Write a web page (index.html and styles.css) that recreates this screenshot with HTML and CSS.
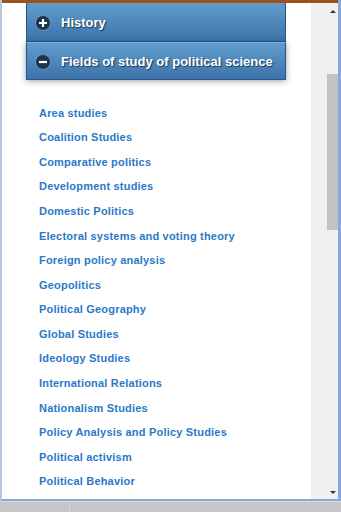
FILE: index.html
```html
<!DOCTYPE html>
<html>
<head>
<meta charset="utf-8">
<link rel="stylesheet" href="styles.css">
</head>
<body>
<div class="frame">
  <div class="window">
    <div class="topbar"></div>
    <div class="main">
      <div class="content">
        <div class="accordion">
          <div class="acc-head first">
            <span class="acc-icon"><svg width="16" height="16" viewBox="0 0 16 16"><circle cx="8" cy="8" r="7.5" fill="#1a3550" stroke="#6f93b8" stroke-width="1"/><path d="M4 8h8M8 4v8" stroke="#fff" stroke-width="2.2"/></svg></span>
            <span class="acc-title">History</span>
          </div>
          <div class="acc-head open">
            <span class="acc-icon"><svg width="16" height="16" viewBox="0 0 16 16"><circle cx="8" cy="8" r="7.5" fill="#1a3550" stroke="#6f93b8" stroke-width="1"/><path d="M4 8h8" stroke="#fff" stroke-width="2.2"/></svg></span>
            <span class="acc-title">Fields of study of political science</span>
          </div>
        </div>
        <ul class="fields">
          <li>Area studies</li>
          <li>Coalition Studies</li>
          <li>Comparative politics</li>
          <li>Development studies</li>
          <li>Domestic Politics</li>
          <li>Electoral systems and voting theory</li>
          <li>Foreign policy analysis</li>
          <li>Geopolitics</li>
          <li>Political Geography</li>
          <li>Global Studies</li>
          <li>Ideology Studies</li>
          <li>International Relations</li>
          <li>Nationalism Studies</li>
          <li>Policy Analysis and Policy Studies</li>
          <li>Political activism</li>
          <li>Political Behavior</li>
        </ul>
      </div>
      <div class="scrollbar">
        <div class="sb-col">
          <div class="arrow up"></div>
          <div class="thumb"></div>
          <div class="sb-fill"></div>
          <div class="arrow down"></div>
        </div>
      </div>
    </div>
  </div>
  <div class="taskbar">
    <div class="task-seg"></div>
  </div>
</div>
</body>
</html>
```

FILE: styles.css
```css
html, body {
  margin: 0;
  padding: 0;
}

.frame {
  width: 341px;
  height: 512px;
  display: flex;
  flex-direction: column;
  background: #c6c6c6;
  overflow: hidden;
}

.window {
  height: 501px;
  box-sizing: border-box;
  border-left: 2px solid #b8c7dc;
  border-right: 3px solid #86a8dc;
  border-bottom: 2px solid #86a8dc;
  display: flex;
  flex-direction: column;
}

.topbar {
  height: 3px;
  background: #9c501e;
  flex: none;
}

.main {
  flex: 1;
  display: flex;
  min-height: 0;
}

.content {
  flex: 1;
  background: #fff;
  padding-left: 24px;
  overflow: hidden;
}

.accordion {
  width: 260px;
}

.acc-head {
  box-sizing: border-box;
  display: flex;
  align-items: center;
  gap: 10px;
  padding-left: 8px;
  padding-top: 2px;
  background: linear-gradient(#5f9dcd, #3d73aa);
  border: 1px solid #2a5687;
  border-top: 0;
  color: #fff;
  font-family: "Liberation Sans", Arial, sans-serif;
  font-weight: bold;
  font-size: 13px;
  text-shadow: 1px 1px 1px #1c3756;
}

.acc-head.first {
  height: 39px;
}

.acc-head.open {
  height: 38px;
  border-top: 1px solid #7eaed6;
  box-shadow: 0 1px 6px rgba(20, 40, 70, 0.45);
  position: relative;
}

.acc-icon {
  display: flex;
  width: 16px;
  height: 16px;
}

.acc-title {
  line-height: 16px;
}

.fields {
  list-style: none;
  margin: 20.75px 0 0 0;
  padding: 0 0 0 13px;
  font-family: "Liberation Sans", Arial, sans-serif;
  font-weight: bold;
  font-size: 11px;
  letter-spacing: 0.2px;
  color: #2a79c9;
}

.fields li {
  line-height: 24.56px;
  white-space: nowrap;
}

.scrollbar {
  width: 27px;
  background: #f0f0f0;
  display: flex;
  justify-content: flex-end;
}

.sb-col {
  width: 11px;
  display: flex;
  flex-direction: column;
  align-items: center;
}

.arrow {
  width: 0;
  height: 0;
  border-left: 3px solid transparent;
  border-right: 3px solid transparent;
}

.arrow.up {
  margin-top: 7px;
  border-bottom: 3px solid #333;
}

.arrow.down {
  margin-bottom: 5px;
  border-top: 3px solid #333;
}

.thumb {
  width: 11px;
  height: 156px;
  margin-top: 61px;
  background: #c2c2c2;
}

.sb-fill {
  flex: 1;
}

.taskbar {
  flex: 1;
  display: flex;
  border-top: 1px solid #dcdcdc;
}

.task-seg {
  width: 69px;
  border-right: 1px solid #d8d8d8;
}
```
